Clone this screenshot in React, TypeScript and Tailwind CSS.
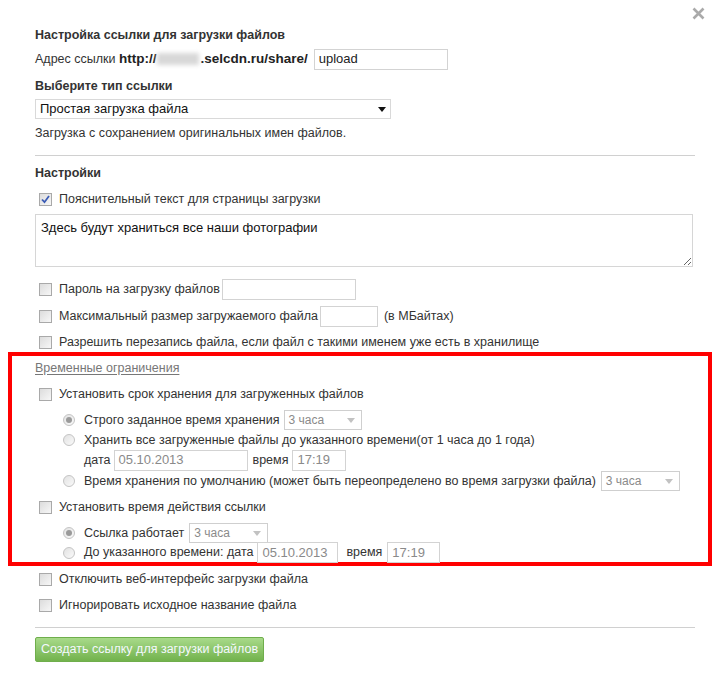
function Checkbox({ checked = false }: { checked?: boolean }) {
  return (
    <span className="mr-[7px] ml-[4px] flex h-[13px] w-[13px] shrink-0 items-center justify-center border border-[#a9a9a9] bg-gradient-to-br from-[#dcdcdc] to-[#f7f7f7]">
      {checked ? (
        <svg width="9" height="9" viewBox="0 0 9 9">
          <path d="M1 4.5 L3.5 7.2 L8 1" fill="none" stroke="#3a5bb5" strokeWidth="1.8" />
        </svg>
      ) : null}
    </span>
  )
}

function Radio({ checked = false }: { checked?: boolean }) {
  return (
    <span className="mr-[9px] flex h-[12px] w-[12px] shrink-0 items-center justify-center rounded-full border border-[#c4c4c4] bg-gradient-to-br from-[#e2e2e2] to-[#fafafa]">
      {checked ? <span className="h-[6px] w-[6px] rounded-full bg-[#9a9a9a]" /> : null}
    </span>
  )
}

function TextBox({ value, w, dim = true }: { value?: string; w: string; dim?: boolean }) {
  return (
    <span
      className={`flex h-[21px] items-center border border-[#d3d3d3] bg-white px-[4px] text-[13px] ${w} ${
        dim ? "text-[#8a8a8a]" : "text-[#222]"
      }`}
    >
      {value}
    </span>
  )
}

function SmallSelect({ w }: { w: string }) {
  return (
    <span className={`flex h-[20px] items-center justify-between border border-[#cfcfcf] bg-white pl-[4px] pr-[6px] text-[12px] text-[#8a8a8a] ${w}`}>
      3 часа
      <svg width="8" height="5" viewBox="0 0 8 5">
        <path d="M0 0 H8 L4 5 Z" fill="#c2c2c2" />
      </svg>
    </span>
  )
}

function CheckRow({ label, checked, className = "h-[24px]", children }: { label: string; checked?: boolean; className?: string; children?: React.ReactNode }) {
  return (
    <div className={`flex items-center ${className}`}>
      <Checkbox checked={checked} />
      <span>{label}</span>
      {children}
    </div>
  )
}

function RadioRow({ checked, children, className = "h-[20px]" }: { checked?: boolean; children: React.ReactNode; className?: string }) {
  return (
    <div className={`flex items-center pl-[28px] ${className}`}>
      <Radio checked={checked} />
      {children}
    </div>
  )
}

export default function App() {
  return (
    <div className="relative h-[688px] w-[718px] bg-white text-[12.5px] text-[#333]" style={{ fontFamily: '"Liberation Sans", Arial, sans-serif' }}>
      <svg className="absolute right-[13px] top-[7px]" width="13" height="13" viewBox="0 0 13 13">
        <path d="M1.5 1.5 L11.5 11.5 M11.5 1.5 L1.5 11.5" stroke="#aaaaaa" strokeWidth="2.6" />
      </svg>

      <div className="pl-[35px] pr-[23px] pt-[23px]">
        <div className="flex h-[24px] items-center font-bold">Настройка ссылки для загрузки файлов</div>
        <div className="flex h-[24px] items-center">
          <span>Адрес ссылки&nbsp;</span>
          <b className="text-[13.5px] text-[#222]">http://</b>
          <span className="mx-[1px] inline-block h-[12px] w-[42px] bg-[#d8d8d8] blur-[2px]" />
          <b className="text-[13.5px] text-[#222]">.selcdn.ru/share/</b>
          <span className="ml-[6px]">
            <TextBox value="upload" w="w-[134px]" dim={false} />
          </span>
        </div>
        <div className="mt-[3px] flex h-[24px] items-center font-bold">Выберите тип ссылки</div>
        <div className="mt-[1px] flex h-[20px] w-[356px] items-center justify-between border border-[#d9d9d9] bg-white pl-[4px] pr-[4px] text-[13px] text-[#111]">
          Простая загрузка файла
          <svg width="8" height="5" viewBox="0 0 8 5">
            <path d="M0 0 H8 L4 5 Z" fill="#111" />
          </svg>
        </div>
        <div className="mt-[2px] flex h-[24px] items-center">Загрузка с сохранением оригинальных имен файлов.</div>

        <div className="mt-[10px] border-t border-[#d0d0d0]" />

        <div className="mt-[5px] flex h-[24px] items-center font-bold">Настройки</div>
        <CheckRow label="Пояснительный текст для страницы загрузки" checked className="mt-[2px] h-[24px]" />
        <textarea
          className="mt-[3px] block h-[53px] w-[658px] resize-y border border-[#d6d6d6] px-[5px] py-[3px] text-[13px] text-[#111] outline-none"
          defaultValue="Здесь будут храниться все наши фотографии"
        />
        <CheckRow label="Пароль на загрузку файлов" className="mt-[9px] h-[27px]">
          <span className="ml-[2px]">
            <TextBox w="w-[134px]" />
          </span>
        </CheckRow>
        <CheckRow label="Максимальный размер загружаемого файла" className="h-[27px]">
          <span className="ml-[2px] mr-[6px]">
            <TextBox w="w-[58px]" />
          </span>
          <span>(в МБайтах)</span>
        </CheckRow>
        <CheckRow label="Разрешить перезапись файла, если файл с такими именем уже есть в хранилище" className="mt-[3px] h-[19px]" />

        <div className="-ml-[27px] w-[704px] border-4 border-[#ff0000] pl-[23px]">
          <div className="flex h-[24px] items-center">
            <span className="text-[#777] underline underline-offset-2">Временные ограничения</span>
          </div>
          <CheckRow label="Установить срок хранения для загруженных файлов" className="mt-[2px] h-[24px]" />
          <RadioRow checked className="mt-[4px] h-[20px]">
            <span>Строго заданное время хранения</span>
            <span className="ml-[4px]">
              <SmallSelect w="w-[78px]" />
            </span>
          </RadioRow>
          <RadioRow>
            <span>Хранить все загруженные файлы до указанного времени(от 1 часа до 1 года)</span>
          </RadioRow>
          <div className="flex h-[20px] items-center pl-[49px]">
            <span>дата</span>
            <span className="ml-[3px]">
              <TextBox value="05.10.2013" w="w-[134px]" />
            </span>
            <span className="ml-[5px]">время</span>
            <span className="ml-[4px]">
              <TextBox value="17:19" w="w-[54px]" />
            </span>
          </div>
          <RadioRow className="mt-[1px] h-[20px]">
            <span>Время хранения по умолчанию (может быть переопределено во время загрузки файла)</span>
            <span className="ml-[5px]">
              <SmallSelect w="w-[79px]" />
            </span>
          </RadioRow>
          <CheckRow label="Установить время действия ссылки" className="mt-[4px] h-[24px]" />
          <RadioRow checked className="mt-[4px] h-[20px]">
            <span>Ссылка работает</span>
            <span className="ml-[5px]">
              <SmallSelect w="w-[79px]" />
            </span>
          </RadioRow>
          <RadioRow className="h-[19px]">
            <span>До указанного времени: дата</span>
            <span className="ml-[4px]">
              <TextBox value="05.10.2013" w="w-[81px]" />
            </span>
            <span className="ml-[8px]">время</span>
            <span className="ml-[5px]">
              <TextBox value="17:19" w="w-[53px]" />
            </span>
          </RadioRow>
        </div>

        <CheckRow label="Отключить веб-интерфейс загрузки файла" className="mt-[1px] h-[24px]" />
        <CheckRow label="Игнорировать исходное название файла" className="mt-[2px] h-[24px]" />

        <div className="mt-[10px] border-t border-[#d0d0d0]" />

        <button className="mt-[9px] flex h-[25px] items-center rounded-[2px] border border-[#6fae4c] bg-gradient-to-b from-[#a8da8a] to-[#72b24c] px-[5px] text-[12.5px] text-[#f4f8ff]">
          Создать ссылку для загрузки файлов
        </button>
      </div>
    </div>
  )
}
